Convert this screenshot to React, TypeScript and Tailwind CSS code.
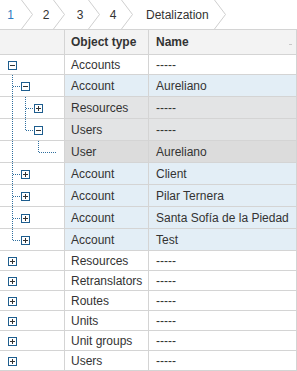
type Tree = {
  lines?: number[];
  elbow?: { x: number; end: number; last: boolean };
  box?: { x: number; open: boolean };
};

type Row = { tree: Tree; type: string; name: string; bg: string; tall?: boolean };

const blue = 'bg-[#e3eef6]';
const gray = 'bg-[#e3e4e5]';

const rows: Row[] = [
  { tree: { box: { x: 8, open: true } }, type: 'Accounts', name: '-----', bg: 'bg-white' },
  { tree: { elbow: { x: 12, end: 21, last: false }, box: { x: 21, open: true } }, type: 'Account', name: 'Aureliano', bg: blue, tall: true },
  { tree: { lines: [12], elbow: { x: 25, end: 34, last: false }, box: { x: 34, open: false } }, type: 'Resources', name: '-----', bg: gray, tall: true },
  { tree: { lines: [12], elbow: { x: 25, end: 34, last: true }, box: { x: 34, open: true } }, type: 'Users', name: '-----', bg: gray, tall: true },
  { tree: { lines: [12], elbow: { x: 38, end: 57, last: true } }, type: 'User', name: 'Aureliano', bg: 'bg-[#dcdcdc]', tall: true },
  { tree: { elbow: { x: 12, end: 21, last: false }, box: { x: 21, open: false } }, type: 'Account', name: 'Client', bg: blue, tall: true },
  { tree: { elbow: { x: 12, end: 21, last: false }, box: { x: 21, open: false } }, type: 'Account', name: 'Pilar Ternera', bg: blue, tall: true },
  { tree: { elbow: { x: 12, end: 21, last: false }, box: { x: 21, open: false } }, type: 'Account', name: 'Santa Sofía de la Piedad', bg: blue, tall: true },
  { tree: { elbow: { x: 12, end: 21, last: true }, box: { x: 21, open: false } }, type: 'Account', name: 'Test', bg: blue, tall: true },
  { tree: { box: { x: 8, open: false } }, type: 'Resources', name: '-----', bg: 'bg-white' },
  { tree: { box: { x: 8, open: false } }, type: 'Retranslators', name: '-----', bg: 'bg-white' },
  { tree: { box: { x: 8, open: false } }, type: 'Routes', name: '-----', bg: 'bg-white' },
  { tree: { box: { x: 8, open: false } }, type: 'Units', name: '-----', bg: 'bg-white' },
  { tree: { box: { x: 8, open: false } }, type: 'Unit groups', name: '-----', bg: 'bg-white' },
  { tree: { box: { x: 8, open: false } }, type: 'Users', name: '-----', bg: 'bg-white' },
];

function TreeIcon({ tree, tall }: { tree: Tree; tall?: boolean }) {
  const h = tall ? 21 : 19;
  const cy = tall ? 11.5 : 10.5;
  const dot = { stroke: '#2f6f9f', strokeWidth: 1, strokeDasharray: '1 1' };
  return (
    <svg width="64" height={h} viewBox={`0 0 64 ${h}`} className="block">
      {tree.lines?.map((x) => (
        <line key={x} x1={x + 0.5} y1={0} x2={x + 0.5} y2={h} {...dot} />
      ))}
      {tree.elbow && (
        <>
          <line x1={tree.elbow.x + 0.5} y1={0} x2={tree.elbow.x + 0.5} y2={tree.elbow.last ? cy + 0.5 : h} {...dot} />
          <line x1={tree.elbow.x + 1} y1={cy} x2={tree.elbow.end} y2={cy} {...dot} />
        </>
      )}
      {tree.box && (
        <>
          <rect x={tree.box.x + 0.5} y={cy - 4} width={8} height={8} fill="#fff" stroke="#1d5d8e" />
          <line x1={tree.box.x + 2} y1={cy} x2={tree.box.x + 7} y2={cy} stroke="#333" />
          {!tree.box.open && <line x1={tree.box.x + 4.5} y1={cy - 2.5} x2={tree.box.x + 4.5} y2={cy + 2.5} stroke="#333" />}
        </>
      )}
    </svg>
  );
}

function Chevron() {
  return (
    <svg width="12" height="29" viewBox="0 0 12 29" className="shrink-0">
      <polyline points="0.5,0 11.5,14.5 0.5,29" fill="none" stroke="#cfcfcf" />
    </svg>
  );
}

function App() {
  return (
    <div className="w-[297px] h-[371px] overflow-hidden bg-white text-[12px] text-[#333] font-['Liberation_Sans',Arial,sans-serif]">
      <div className="flex items-center h-[30px] border-b border-[#d4d4d4]">
        <span className="w-[21px] text-center text-[#2f7bbf]">1</span>
        <Chevron />
        <span className="w-[20px] pl-[6px] text-center">2</span>
        <Chevron />
        <span className="w-[23px] pl-[7px] text-center">3</span>
        <Chevron />
        <span className="w-[21px] pl-[5px] text-center">4</span>
        <Chevron />
        <span className="pl-[13px] pr-[5px]">Detalization</span>
        <Chevron />
      </div>

      <div className="grid grid-cols-[65px_84px_148px] h-[25px] bg-[#f3f3f3] font-bold">
        <div className="border-r border-b border-[#d4d4d4]" />
        <div className="border-r border-b border-[#d4d4d4] pl-[6px] flex items-center">Object type</div>
        <div className="border-r border-b border-[#d4d4d4] pl-[7px] pr-[4px] flex items-center justify-between">
          <span>Name</span>
          <span className="w-[3px] h-px bg-[#c8c8c8] mt-[4px]" />
        </div>
      </div>

      {rows.map((r, i) => (
        <div key={i} className={`grid grid-cols-[65px_84px_148px] ${r.tall ? 'h-[22px]' : 'h-[20px]'}`}>
          <div className="border-r border-b border-[#d4d4d4] bg-white">
            <TreeIcon tree={r.tree} tall={r.tall} />
          </div>
          <div className={`border-r border-b border-[#d4d4d4] pl-[6px] flex items-center whitespace-nowrap ${r.bg}`}>{r.type}</div>
          <div className={`border-r border-b border-[#d4d4d4] pl-[7px] flex items-center whitespace-nowrap ${r.bg}`}>{r.name}</div>
        </div>
      ))}
    </div>
  );
}

export default App;
